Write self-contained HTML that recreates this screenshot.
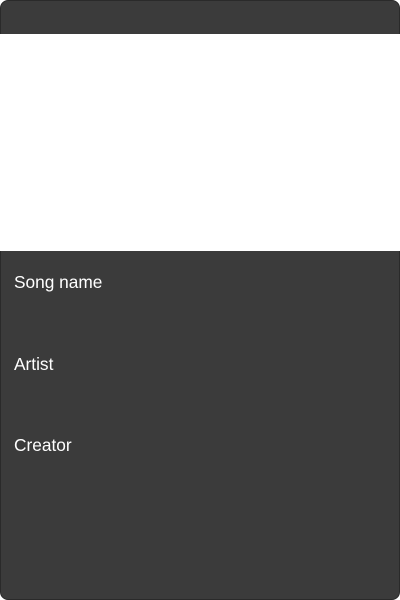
<!DOCTYPE html>
<html><head><style>
html,body{margin:0;padding:0;background:#fff;}
.card{position:absolute;left:0;top:0;width:398px;height:598px;background:#3b3b3b;border:1px solid #2a2a2a;border-radius:8px;}
.img{position:absolute;left:-1px;top:33px;width:400px;height:217px;background:#fff;}
.t{position:absolute;left:13px;color:#fff;font-family:"Liberation Sans",sans-serif;font-size:17.3px;}
</style></head><body>
<div class="card">
<div class="img"></div>
<div class="t" style="top:271px">Song name</div>
<div class="t" style="top:353px">Artist</div>
<div class="t" style="top:434px">Creator</div>
</div>
</body></html>
